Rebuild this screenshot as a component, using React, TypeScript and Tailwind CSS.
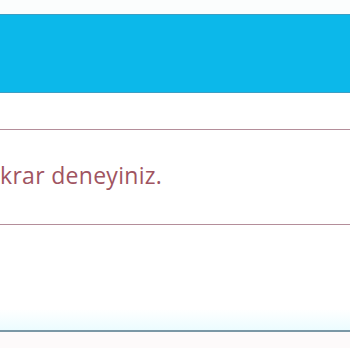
export default function App() {
  return (
    <div className="w-[350px] h-[350px] overflow-hidden bg-white font-['Open_Sans',sans-serif]">
      <div className="h-[14px] bg-[#fbfdfd]" />
      {/* header bar */}
      <div className="h-[79px] bg-[#0cb8ea] border-y border-[#3b9ec4]" />
      <div className="h-[36px] bg-white" />
      {/* error message */}
      <div className="h-[96px] border-y border-[#b48e9a] flex items-center pb-[4px]">
        <p className="text-[23px] leading-none tracking-[0.3px] text-[#a05461] whitespace-nowrap">krar deneyiniz.</p>
      </div>
      <div className="h-[105px] bg-gradient-to-b from-white from-80% to-[#ecfcff]" />
      <div className="h-[2px] bg-[#7b98a6]" />
      <div className="h-[16px] bg-[#fdfafa]" />
    </div>
  );
}
